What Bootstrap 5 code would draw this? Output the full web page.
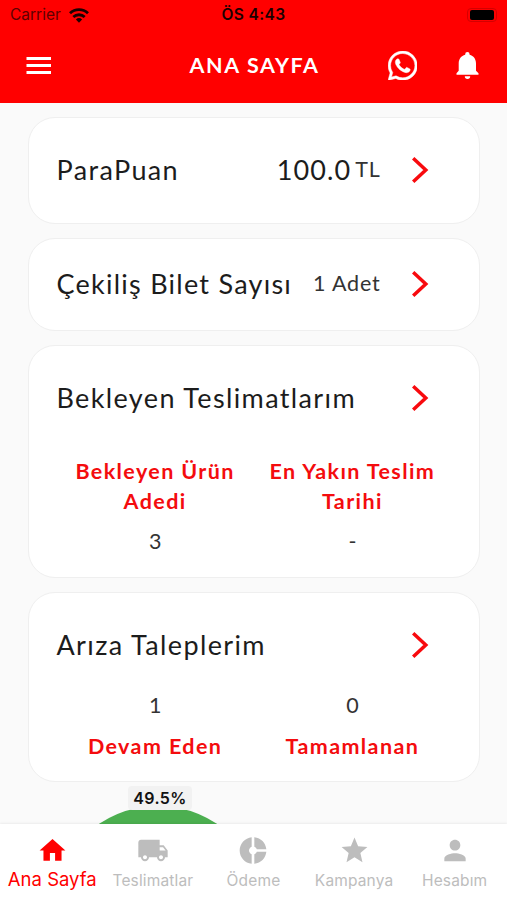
<!DOCTYPE html>
<html lang="tr">
<head>
<meta charset="utf-8">
<meta name="viewport" content="width=device-width, initial-scale=1">
<title>Ana Sayfa</title>
<link href="https://cdn.jsdelivr.net/npm/bootstrap@5.3.0/dist/css/bootstrap.min.css" rel="stylesheet">
<style>
  body { font-family: Lato, "Open Sans", sans-serif; background: #fafafa; color: #1c1c1c; }
  .screen { height: 900px; }
  .app-header { background: #f00; height: 103px; }
  .status-bar { height: 28px; font: 15.5px/28px Inter, sans-serif; color: #1a0000; padding: 1px 10px 0 10px; }
  .status-bar .carrier { letter-spacing: 0; color: #5e0000; }
  .status-bar .clock { font-weight: 600; font-size: 15.5px; letter-spacing: .4px; }
  .battery { width: 30px; height: 14px; border: 1px solid #d40000; border-radius: 4px; padding: 1px 2px; }
  .battery span { display: block; height: 10px; border-radius: 2px; background: #000; }
  .title-bar { height: 75px; color: #fff; padding: 0 23px 0 25px; }
  .title-bar .page-title { font-size: 21.5px; font-weight: 700; letter-spacing: 1.6px; line-height: 1; }
  .menu-icon { margin-bottom: 2px; }
  .wa-icon { margin-right: 33px; }
  .feed { padding: 14px 27px 0 28px; gap: 14px; }
  .tile { border: 1.5px solid #efefef; border-radius: 27px; padding: 0 27px 0 27.500px; }
  .tile-lg { height: 106.5px; }
  .tile-md { height: 93px; }
  .tile-wait { height: 233px; }
  .tile-fault { height: 190px; }
  .tile-head { padding-right: 23.5px; }
  .tile-wait .tile-head, .tile-fault .tile-head { height: 104px; }
  .tile-name { font-size: 27px; letter-spacing: 1.37px; line-height: 1; padding-bottom: 1px; }
  .tile-name.amount { letter-spacing: 1.1px; }
  .tile-name.tickets { letter-spacing: 1.25px; }
  .unit { font-size: 21.5px; letter-spacing: .8px; color: #333; line-height: 1; padding-bottom: 1px; }
  .chevron { margin-left: 30px; }
  .stat-label { color: #f40c0e; font-size: 21.5px; font-weight: 700; letter-spacing: 1.4px; line-height: 30px; }
  .stat-value { font-size: 21.5px; line-height: 30px; color: #333; }
  .stats { padding: 2px 1px 0 0; }
  .tile-wait .stat-label { margin-top: 4px; margin-bottom: 10px; }
  .tile-fault .stats { margin-top: -9px; }
  .tile-fault .stat-value { margin-bottom: 11px; }
  .chart { height: 42px; width: 212px; margin: -11px 0 0 24px; }
  .pie { position: absolute; top: 21px; left: 0; width: 212px; height: 212px; border-radius: 50%; background: #4caf50; }
  .pie-tag { position: absolute; top: 1px; left: 76px; width: 64px; height: 24px; border-radius: 4px; background: #f2f2f2; color: #111; font: 600 16px/24px Inter, sans-serif; letter-spacing: .4px; }
  .tabs { height: 76px; background: #fff; box-shadow: 0 -1px 2px rgba(0,0,0,.06); font-family: Inter, sans-serif; font-size: 15.5px; letter-spacing: .15px; color: #bdbdbd; padding-right: 2px; }
  .tab { padding-top: 11px; }
  .tab svg { display: block; }
  .tab span { line-height: 29px; }
  .tab.on { color: #f00; padding-left: 2px; }
  .tab.on span { font-size: 18.5px; line-height: 26px; letter-spacing: 0; }
</style>
<script src="https://cdn.jsdelivr.net/npm/bootstrap@5.3.0/dist/js/bootstrap.bundle.min.js"></script>
</head>
<body>
<svg class="d-none">
  <symbol id="chev" viewBox="0 0 18 28"><path d="M2.2 2.2 14.8 14 2.2 25.8" fill="none" stroke="#f80a0e" stroke-width="3.5"/></symbol>
</svg>
<div class="screen d-flex flex-column overflow-hidden">
  <header class="app-header flex-shrink-0">
    <div class="status-bar row g-0 align-items-center">
      <div class="col d-flex align-items-center gap-2"><span class="carrier">Carrier</span>
        <svg width="20" height="15" viewBox="0 0 20 15" fill="none" stroke="#1a0000" stroke-width="2.8"><path d="M1 5.3a13 13 0 0 1 18 0M4.3 9a8.3 8.3 0 0 1 11.4 0"/><path d="M6.9 11.4a4.6 4.6 0 0 1 6.2 0L10 14.7z" fill="#1a0000" stroke="none"/></svg>
      </div>
      <div class="col-auto clock">ÖS 4:43</div>
      <div class="col d-flex justify-content-end"><div class="battery"><span></span></div></div>
    </div>
    <div class="title-bar row g-0 align-items-center">
      <div class="col"><svg class="menu-icon" width="27" height="18" viewBox="0 0 27 18" fill="#fff"><path d="M1.500 0H26v3H1.500zM1.500 7H26v3H1.500zM1.500 14H26v3H1.500z"/></svg></div>
      <div class="col-auto page-title">ANA SAYFA</div>
      <div class="col d-flex justify-content-end align-items-center">
        <svg class="wa-icon" width="29.5" height="29.5" viewBox="0 0 16 16" fill="#fff"><path d="M13.601 2.326A7.854 7.854 0 0 0 7.994 0C3.627 0 .068 3.558.064 7.926c0 1.399.366 2.760 1.057 3.965L0 16l4.204-1.102a7.933 7.933 0 0 0 3.790.965h.004c4.368 0 7.926-3.558 7.930-7.930A7.898 7.898 0 0 0 13.600 2.326zM7.994 14.521a6.573 6.573 0 0 1-3.356-.920l-.240-.144-2.494.654.666-2.433-.156-.251a6.560 6.560 0 0 1-1.007-3.505c0-3.626 2.957-6.584 6.591-6.584a6.560 6.560 0 0 1 4.660 1.931 6.557 6.557 0 0 1 1.928 4.660c-.004 3.639-2.961 6.592-6.592 6.592zm3.615-4.934c-.197-.099-1.170-.578-1.353-.646-.182-.065-.315-.099-.445.099-.133.197-.513.646-.627.775-.114.133-.232.148-.430.050-.197-.100-.836-.308-1.592-.985-.590-.525-.985-1.175-1.103-1.372-.114-.198-.011-.304.088-.403.087-.088.197-.232.296-.346.100-.114.133-.198.198-.330.065-.134.034-.248-.015-.347-.050-.099-.445-1.076-.612-1.470-.160-.389-.323-.335-.445-.340-.114-.007-.247-.007-.380-.007a.729.729 0 0 0-.529.247c-.182.198-.691.677-.691 1.654 0 .977.710 1.916.810 2.049.098.133 1.394 2.132 3.383 2.992.470.205.840.326 1.129.418.475.152.904.129 1.246.080.380-.058 1.171-.480 1.338-.943.164-.464.164-.860.114-.943-.049-.084-.182-.133-.380-.232z" stroke="#fff" stroke-width=".25"/></svg>
        <svg width="34" height="30" viewBox="0 0 34 30" fill="#fff"><path d="M19.600 3.800V3.300a2.200 2.200 0 0 0-4.400 0v.5c-4 1-6.500 4.300-6.500 8.700v7.300L6.500 22.300v1.500h22v-1.500l-2.500-2.500v-7.300c0-4.400-2.400-7.700-6.400-8.700zM14.800 25.300a2.700 2.700 0 0 0 5.400 0z"/></svg>
      </div>
    </div>
  </header>

  <main class="feed d-flex flex-column flex-grow-1 overflow-hidden">
    <section class="tile tile-lg bg-white flex-shrink-0 d-flex">
      <div class="tile-head d-flex align-items-center w-100">
        <span class="tile-name me-auto">ParaPuan</span>
        <span class="tile-name amount">100.0</span><span class="unit ms-1">TL</span>
        <svg class="chevron" width="18" height="28"><use href="#chev"/></svg>
      </div>
    </section>
    <section class="tile tile-md bg-white flex-shrink-0 d-flex">
      <div class="tile-head d-flex align-items-center w-100">
        <span class="tile-name tickets me-auto">Çekiliş Bilet Sayısı</span>
        <span class="unit">1 Adet</span>
        <svg class="chevron" width="18" height="28"><use href="#chev"/></svg>
      </div>
    </section>
    <section class="tile tile-wait bg-white flex-shrink-0">
      <div class="tile-head d-flex align-items-center">
        <span class="tile-name me-auto">Bekleyen Teslimatlarım</span>
        <svg class="chevron" width="18" height="28"><use href="#chev"/></svg>
      </div>
      <div class="stats row g-0 text-center">
        <div class="col"><div class="stat-label">Bekleyen Ürün<br>Adedi</div><div class="stat-value">3</div></div>
        <div class="col"><div class="stat-label">En Yakın Teslim<br>Tarihi</div><div class="stat-value">-</div></div>
      </div>
    </section>
    <section class="tile tile-fault bg-white flex-shrink-0">
      <div class="tile-head d-flex align-items-center">
        <span class="tile-name me-auto">Arıza Taleplerim</span>
        <svg class="chevron" width="18" height="28"><use href="#chev"/></svg>
      </div>
      <div class="stats row g-0 text-center">
        <div class="col"><div class="stat-value">1</div><div class="stat-label">Devam Eden</div></div>
        <div class="col"><div class="stat-value">0</div><div class="stat-label">Tamamlanan</div></div>
      </div>
    </section>
    <div class="chart position-relative flex-shrink-0">
      <div class="pie"></div>
      <div class="pie-tag text-center">49.5%</div>
    </div>
  </main>

  <nav class="tabs row g-0 flex-shrink-0 position-relative text-center">
    <div class="tab on col d-flex flex-column align-items-center"><svg width="31" height="31" viewBox="0 0 24 24" fill="currentColor"><path d="M10 20v-6h4v6h5v-8h3L12 3 2 12h3v8z"/></svg><span>Ana Sayfa</span></div>
    <div class="tab col d-flex flex-column align-items-center"><svg width="32" height="31" viewBox="0 0 24 24" preserveAspectRatio="xMidYMid slice" fill="currentColor"><path d="M20 8h-3V4H3c-1.100 0-2 .9-2 2v11h2c0 1.660 1.340 3 3 3s3-1.340 3-3h6c0 1.660 1.340 3 3 3s3-1.340 3-3h2v-5l-3-4zM6 18.500c-.830 0-1.500-.670-1.500-1.500s.670-1.500 1.500-1.500 1.500.670 1.500 1.500-.670 1.500-1.500 1.500zm13.500-9l1.960 2.500H17V9.500h2.500zm-1.500 9c-.830 0-1.500-.670-1.500-1.500s.670-1.500 1.500-1.500 1.500.670 1.500 1.500-.670 1.500-1.500 1.500z"/></svg><span>Teslimatlar</span></div>
    <div class="tab col d-flex flex-column align-items-center"><svg width="32" height="31" viewBox="0 0 24 24" preserveAspectRatio="xMidYMid slice" fill="currentColor"><path d="M11 9.160V2c-5 .5-9 4.790-9 10s4 9.500 9 10v-7.160c-1-.410-2-1.520-2-2.840s1-2.430 2-2.840zM14.860 11H22c-.480-4.750-4-8.530-9-9v7.160c1 .3 1.520.980 1.860 1.840zm-1.860 3.840V22c5-.470 8.520-4.250 9-9h-7.140c-.340.860-.860 1.540-1.860 1.840z"/></svg><span>Ödeme</span></div>
    <div class="tab col d-flex flex-column align-items-center"><svg width="31" height="31" viewBox="0 0 24 24" fill="currentColor"><path d="M12 17.270 18.180 21l-1.640-7.030L22 9.240l-7.190-.610L12 2 9.190 8.630 2 9.240l5.460 4.730L5.820 21z"/></svg><span>Kampanya</span></div>
    <div class="tab col d-flex flex-column align-items-center"><svg width="32" height="31" viewBox="0 0 24 24" preserveAspectRatio="xMidYMid slice" fill="currentColor"><path d="M12 12c2.210 0 4-1.790 4-4s-1.790-4-4-4-4 1.790-4 4 1.790 4 4 4zm0 2c-2.670 0-8 1.340-8 4v2h16v-2c0-2.660-5.330-4-8-4z"/></svg><span>Hesabım</span></div>
  </nav>
</div>
</body>
</html>
